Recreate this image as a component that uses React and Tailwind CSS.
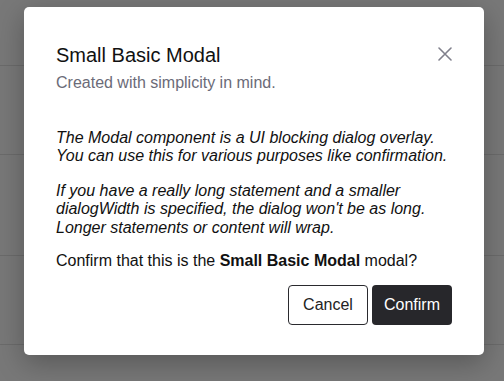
export default function App() {
  return (
    <div className="relative h-[381px] w-[504px] overflow-hidden bg-[#787878]" style={{ fontFamily: '"Liberation Sans", Arial, sans-serif' }}>
      <div className="flex flex-col">
        <div className="h-[66px] border-b border-[#6b6b6b]" />
        <div className="h-[89px] border-b border-[#6b6b6b]" />
        <div className="h-[101px] border-b border-[#6b6b6b]" />
        <div className="h-[89px] border-b border-[#6b6b6b]" />
      </div>
      <div className="absolute left-[24px] top-[7px] h-[348px] w-[460px] rounded-[5px] bg-white px-8 pt-[36px] shadow-[0_8px_28px_rgba(0,0,0,0.28)]">
        <button className="absolute right-[32px] top-[40px] flex h-[14px] w-[14px] items-center justify-center text-[#80808c]">
          <svg width="14" height="14" viewBox="0 0 14 14" fill="none" stroke="currentColor" strokeWidth="1.6" strokeLinecap="round">
            <path d="M1 1 L13 13 M13 1 L1 13" />
          </svg>
        </button>
        <h2 className="text-[20px] leading-[24px] text-[#111111]">Small Basic Modal</h2>
        <p className="mt-[6px] text-[16px] leading-[20px] text-[#6b6b78]">Created with simplicity in mind.</p>
        <div className="mt-[36px] text-[16px] leading-[1.15] text-[#111111]">
          <p className="italic">
            The Modal component is a UI blocking dialog overlay.
            <br />
            You can use this for various purposes like confirmation.
          </p>
          <p className="mt-4 italic">
            If you have a really long statement and a smaller
            <br />
            dialogWidth is specified, the dialog won't be as long.
            <br />
            Longer statements or content will wrap.
          </p>
          <p className="mt-[15px]">
            Confirm that this is the <strong className="font-bold">Small Basic Modal</strong> modal?
          </p>
        </div>
        <div className="mt-[15px] flex justify-end gap-[4px]">
          <button className="h-[40px] w-[80px] rounded-[4px] border border-[#2a2a2e] bg-white text-[16px] text-[#222222]">Cancel</button>
          <button className="h-[40px] w-[80px] rounded-[4px] bg-[#27272b] text-[16px] text-white">Confirm</button>
        </div>
      </div>
    </div>
  );
}
